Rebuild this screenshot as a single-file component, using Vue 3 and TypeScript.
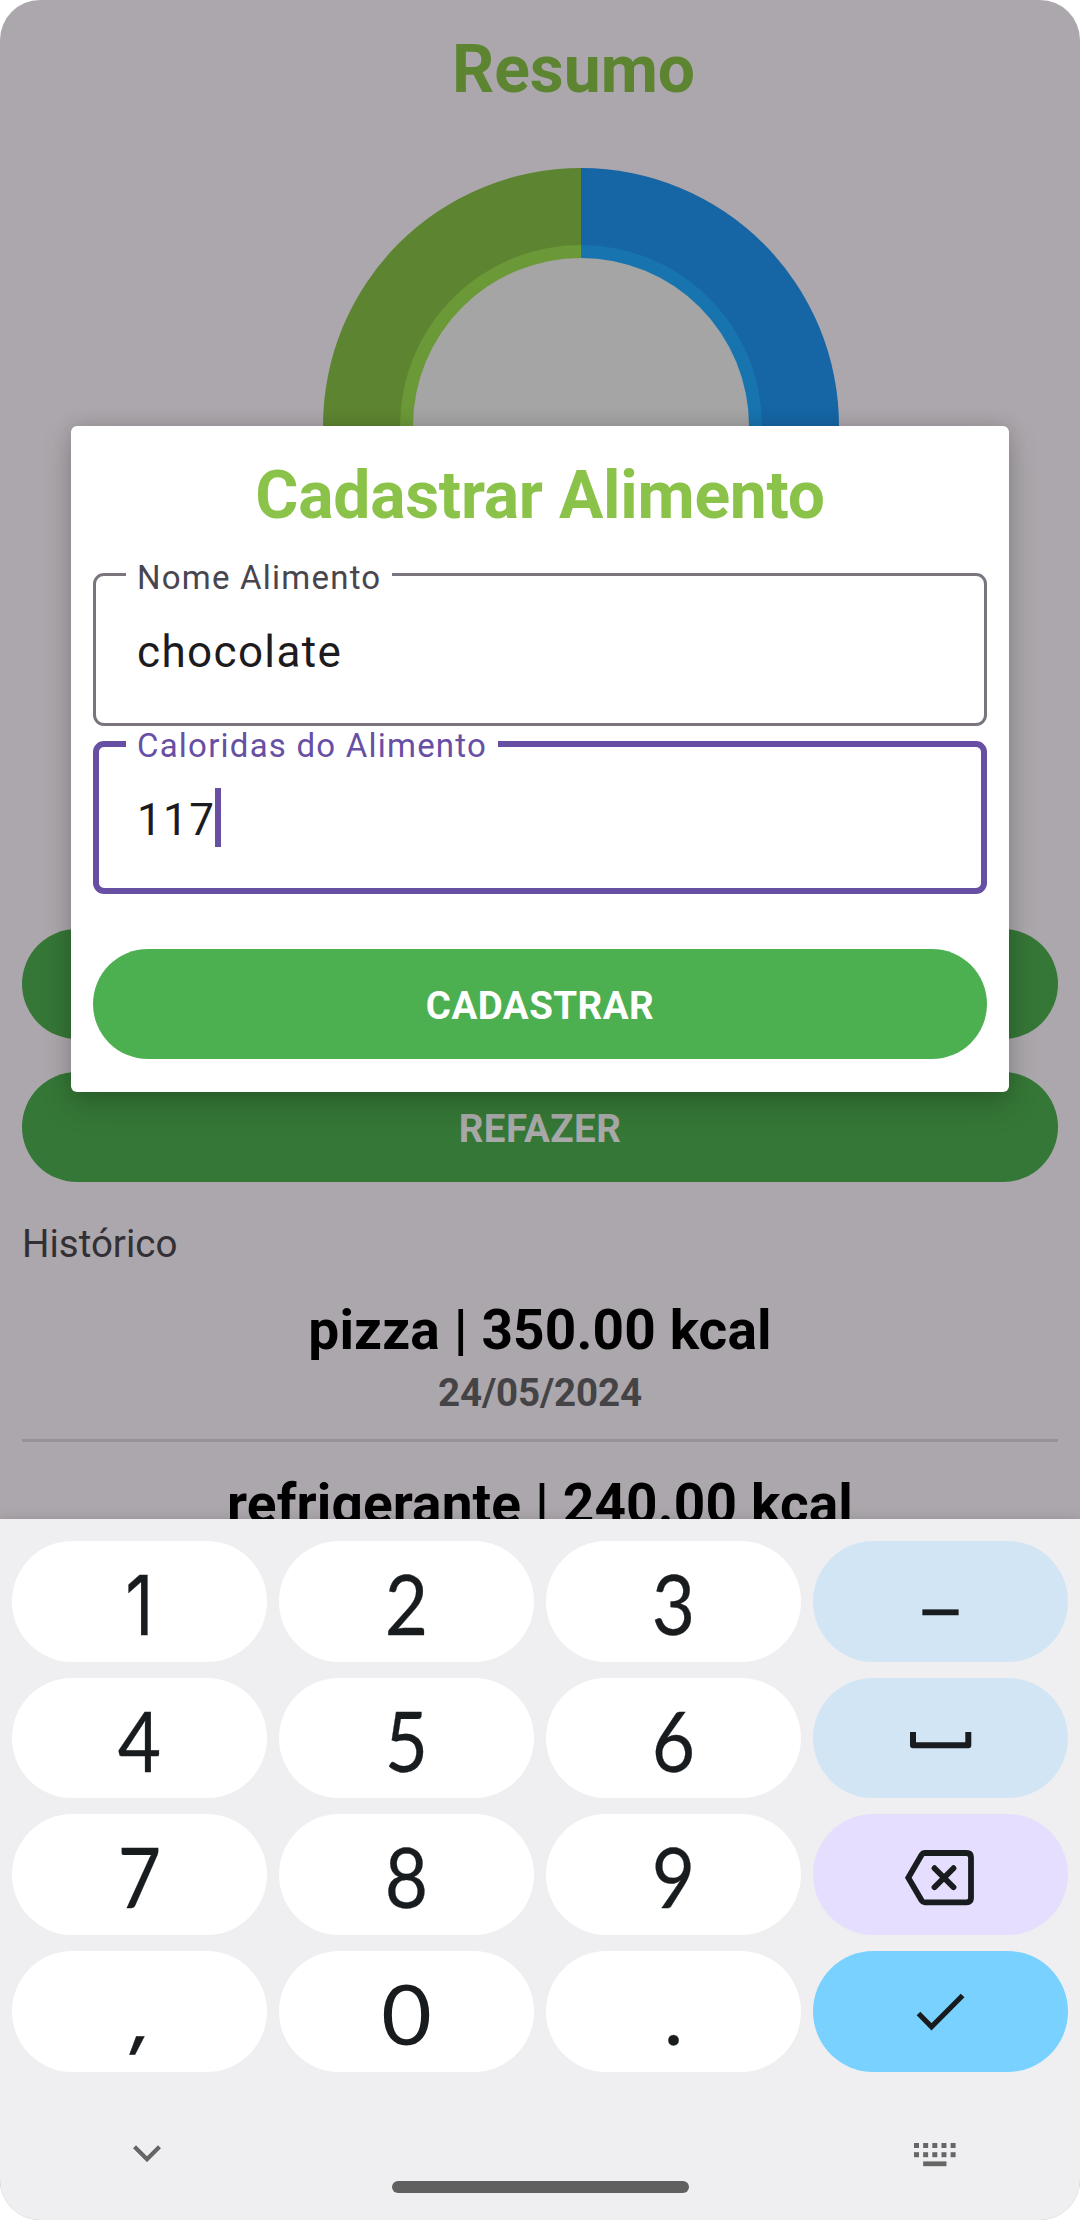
<script setup lang="ts">
interface Entry {
  name: string
  kcal: string
  date?: string
}

interface Key {
  label: string
  kind?: 'soft' | 'erase' | 'done'
  icon?: 'space' | 'erase' | 'done'
  face?: string
}

const history: Entry[] = [
  { name: 'pizza', kcal: '350.00', date: '24/05/2024' },
  { name: 'refrigerante', kcal: '240.00' },
]

const keys: Key[] = [
  { label: '1', face: 'one' },
  { label: '2' },
  { label: '3' },
  { label: '–', kind: 'soft', face: 'dash' },
  { label: '4' },
  { label: '5' },
  { label: '6' },
  { label: '', kind: 'soft', icon: 'space' },
  { label: '7' },
  { label: '8' },
  { label: '9' },
  { label: '', kind: 'erase', icon: 'erase' },
  { label: ',', face: 'comma' },
  { label: '0', face: 'zero' },
  { label: '.', face: 'dot' },
  { label: '', kind: 'done', icon: 'done' },
]

const dotColumns = [0, 1, 2, 3, 4]
</script>

<template>
  <div class="phone">
    <main class="screen">
      <h1 class="heading">Resumo</h1>
      <svg class="chart" width="516" height="516" viewBox="-258 -258 516 516">
        <path d="M0-258A258 258 0 0 0 0 258Z" fill="#5d8531" />
        <path d="M0-258A258 258 0 0 1 0 258Z" fill="#1665a5" />
        <path d="M0-181A181 181 0 0 0 0 181Z" fill="#6c9938" />
        <path d="M0-181A181 181 0 0 1 0 181Z" fill="#1874ae" />
        <circle r="168" fill="#a5a5a5" />
      </svg>
      <button class="pill dim first"></button>
      <button class="pill dim">REFAZER</button>
      <p class="history-label">Histórico</p>
      <section v-for="entry in history" :key="entry.name" class="entry">
        <p class="entry-name">{{ entry.name }} | {{ entry.kcal }} kcal</p>
        <p v-if="entry.date" class="entry-date">{{ entry.date }}</p>
      </section>
    </main>

    <div class="dialog">
      <h2 class="dialog-title">Cadastrar Alimento</h2>
      <fieldset class="field">
        <legend>Nome Alimento</legend>
        <div class="value">chocolate</div>
      </fieldset>
      <fieldset class="field focused">
        <legend>Caloridas do Alimento</legend>
        <div class="value">117<i class="caret"></i></div>
      </fieldset>
      <button class="pill">CADASTRAR</button>
    </div>

    <div class="keyboard">
      <div class="keys">
        <div v-for="(key, i) in keys" :key="i" class="key" :class="key.kind">
          <span v-if="!key.icon" class="digit" :class="key.face">{{ key.label }}</span>
          <svg v-else-if="key.icon === 'space'" width="255" height="121" viewBox="0 0 255 121">
            <path d="M100 54V67.300H155.300V54" fill="none" stroke="#191c1e" stroke-width="6" stroke-linejoin="round" />
          </svg>
          <svg v-else-if="key.icon === 'erase'" width="255" height="121" viewBox="0 0 255 121">
            <g fill="none" stroke="#191c1e" stroke-width="5.800">
              <path
                d="M111.500 39H153.500Q158 39 158 43.500V84Q158 88.300 153.500 88.300H111.500Q109.800 88.300 108.600 86.500L95.300 63.700L108.600 40.800Q109.800 39 111.500 39Z"
              />
              <path d="M121.500 54.200L140.500 73.200M140.500 54.200L121.500 73.200" stroke-linecap="round" />
            </g>
          </svg>
          <svg v-else width="255" height="121" viewBox="0 0 255 121">
            <path d="M105.500 62.500L118.500 75.800L149.600 44.500" fill="none" stroke="#191c1e" stroke-width="5.200" />
          </svg>
        </div>
      </div>
      <div class="navbar">
        <svg class="hide" width="28" height="17" viewBox="0 0 28 17">
          <path d="M1.500 1.700L14 14.200L26.500 1.700" fill="none" stroke="#666" stroke-width="4.200" />
        </svg>
        <div class="home"></div>
        <svg class="switch" width="42" height="24" viewBox="0 0 42 24" fill="#666">
          <rect v-for="c in dotColumns" :key="'a' + c" :x="c * 9.150" y="0" width="5" height="5" />
          <rect v-for="c in dotColumns" :key="'b' + c" :x="c * 9.150" y="9.200" width="5" height="5" />
          <rect x="9.150" y="18.400" width="23.300" height="4.800" />
        </svg>
      </div>
    </div>
  </div>
</template>

<style>
body {
  margin: 0;
  background: #fff;
}
</style>

<style scoped>
.phone {
  position: relative;
  width: 1080px;
  height: 2220px;
  overflow: hidden;
  border-radius: 40px;
  background: #aca7ac;
  font-family: Roboto, sans-serif;
}

h1,
h2,
p {
  margin: 0;
}

.screen {
  display: flex;
  flex-direction: column;
  box-sizing: border-box;
  height: 1519px;
  padding: 31px 22px 0;
  overflow: hidden;
}

.heading {
  padding-left: 67px;
  font-size: 66px;
  line-height: 77px;
  font-weight: 700;
  text-align: center;
  color: #5d8531;
}

.chart {
  display: block;
  flex: none;
  align-self: center;
  margin: 60px 0 0 82px;
}

.pill {
  display: block;
  flex: none;
  width: 100%;
  height: 110px;
  margin: 0;
  padding: 2px 0 0;
  border: 0;
  border-radius: 55px;
  background: #4caf50;
  color: #fff;
  font-family: inherit;
  font-size: 38.5px;
  font-weight: 700;
  line-height: 45px;
  letter-spacing: 0.45px;
}

.dim {
  margin-top: 33px;
  background: #357736;
  color: #a9a9a9;
}

.dim.first {
  margin-top: 245px;
}

.history-label {
  margin-top: 39px;
  font-size: 38.5px;
  line-height: 45px;
  color: #323035;
}

.entry {
  height: 174px;
  flex: none;
  box-sizing: border-box;
  border-bottom: 3px solid #979298;
  font-weight: 700;
  text-align: center;
}

.history-label + .entry {
  margin-top: 2px;
}

.entry-name {
  padding-top: 30px;
  font-size: 55px;
  line-height: 64px;
  letter-spacing: 0.12px;
  color: #000;
}

.entry-date {
  margin-top: 8px;
  font-size: 38.5px;
  line-height: 45px;
  letter-spacing: -0.15px;
  color: #444345;
}

.dialog {
  position: absolute;
  left: 71px;
  top: 426px;
  display: flex;
  flex-direction: column;
  box-sizing: border-box;
  width: 938px;
  height: 666px;
  padding: 31px 22px 33px;
  border-radius: 6px;
  background: #fff;
  box-shadow: 0 12px 32px rgba(0, 0, 0, 0.18), 0 0 18px rgba(0, 0, 0, 0.12);
}

.dialog-title {
  font-size: 66px;
  line-height: 77px;
  font-weight: 700;
  letter-spacing: -0.25px;
  text-align: center;
  color: #8bc34a;
}

.field {
  box-sizing: border-box;
  width: 894px;
  height: 168px;
  min-width: 0;
  margin: 0;
  padding: 0 0 0 30px;
  border: 3px solid #79747e;
  border-radius: 11px;
  color: #49454f;
}

.dialog-title + .field {
  margin-top: 24px;
}

.field legend {
  height: 33px;
  padding: 0 11px;
  font-size: 33px;
  line-height: 39px;
  letter-spacing: 1.22px;
}

.value {
  display: flex;
  align-items: center;
  padding: 31px 0 0 11px;
  font-size: 44px;
  line-height: 60px;
  letter-spacing: 1.375px;
  color: #1d1b20;
}

.focused {
  border: 6px solid #6750a4;
  padding-left: 27px;
  color: #6750a4;
}

.focused legend {
  height: 36px;
}

.focused .value {
  padding-top: 28px;
}

.caret {
  width: 6px;
  height: 59px;
  margin-top: -5px;
  background: #6750a4;
}

.dialog .pill {
  margin-top: auto;
}

.keyboard {
  position: absolute;
  left: 0;
  right: 0;
  top: 1519px;
  bottom: 0;
  background: #efeff1;
  box-shadow: 0 0 12px rgba(0, 0, 0, 0.14);
}

.keys {
  display: grid;
  grid-template: repeat(4, 120.7px) / repeat(4, 255px);
  gap: 16px 12px;
  padding: 22px 12px 0;
}

.key {
  overflow: hidden;
  border-radius: 60.4px;
  background: #fff;
  color: #191c1e;
  text-align: center;
}

.key svg {
  display: block;
}

.soft {
  background: #d2e5f4;
}

.erase {
  background: #e5deff;
}

.done {
  background: #78d1ff;
}

.digit {
  display: block;
  font-family: Lato, sans-serif;
  font-size: 83px;
  line-height: 125px;
  transform: scaleX(0.9);
  -webkit-text-stroke: 0.3px #191c1e;
}

.one {
  font-family: Inter, sans-serif;
  line-height: 128px;
  transform: scaleX(0.84);
}

.comma {
  font-family: Inter, sans-serif;
  line-height: 129px;
  transform: scaleY(0.8) skewX(-8deg);
  transform-origin: 50% 85px;
}

.zero {
  transform: scaleX(1.05);
  -webkit-text-stroke: 0;
}

.dot {
  transform: none;
}

.dash {
  line-height: 129px;
  transform: scaleX(1.08);
}

.navbar {
  display: flex;
  justify-content: space-between;
  align-items: flex-start;
  padding: 71px 124px 0 133px;
}

.hide {
  margin-top: 2px;
}

.home {
  width: 297px;
  height: 12px;
  margin: 38px 0 0 5px;
  border-radius: 6px;
  background: #606060;
}
</style>
